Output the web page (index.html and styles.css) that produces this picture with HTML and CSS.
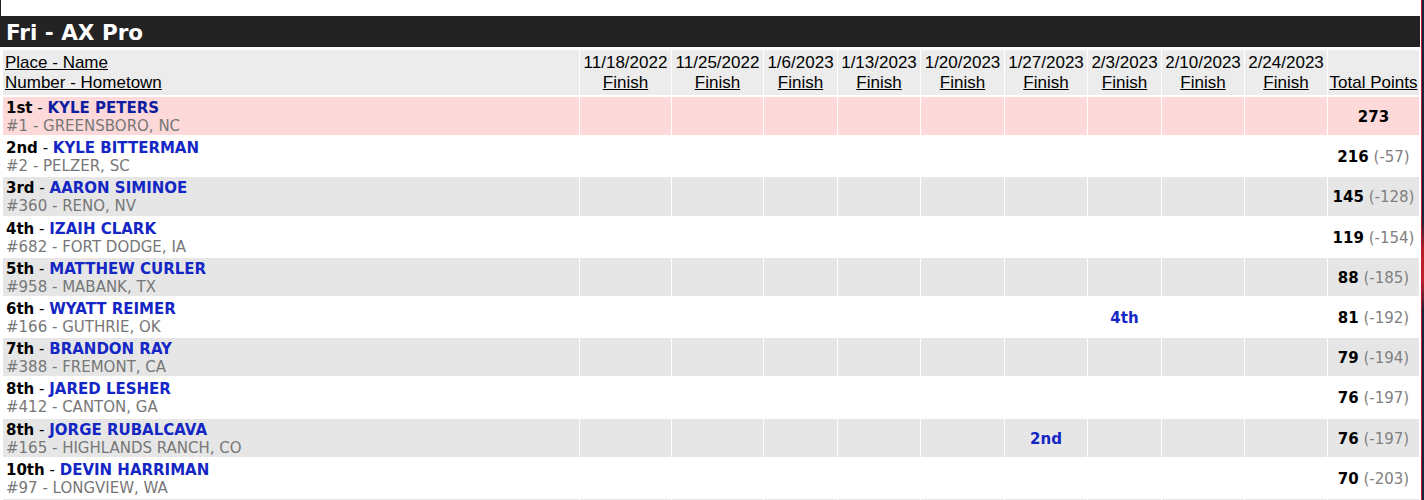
FILE: index.html
```html
<!DOCTYPE html>
<html>
<head>
<meta charset="utf-8">
<title>Fri - AX Pro</title>
<link rel="stylesheet" href="styles.css">
</head>
<body>
<div class="page">
  <div class="topgap"></div>
  <div class="title">Fri - AX Pro</div>
  <table class="standings">
    <colgroup>
      <col class="c-name">
      <col class="w91"><col class="w91"><col class="w73"><col class="w82"><col class="w83">
      <col class="w82"><col class="w73"><col class="w82"><col class="w82"><col class="w91">
    </colgroup>
    <thead>
      <tr>
        <th class="h-name"><a href="#">Place - Name</a><br><a href="#">Number - Hometown</a></th>
        <th>11/18/2022<br><a href="#">Finish</a></th>
        <th>11/25/2022<br><a href="#">Finish</a></th>
        <th>1/6/2023<br><a href="#">Finish</a></th>
        <th>1/13/2023<br><a href="#">Finish</a></th>
        <th>1/20/2023<br><a href="#">Finish</a></th>
        <th>1/27/2023<br><a href="#">Finish</a></th>
        <th>2/3/2023<br><a href="#">Finish</a></th>
        <th>2/10/2023<br><a href="#">Finish</a></th>
        <th>2/24/2023<br><a href="#">Finish</a></th>
        <th><a href="#">Total Points</a></th>
      </tr>
    </thead>
    <tbody>
      <tr class="leader">
        <td class="name"><b>1st</b> - <a class="rider first" href="#">KYLE PETERS</a><br><span class="town">#1 - GREENSBORO, NC</span></td>
        <td></td><td></td><td></td><td></td><td></td><td></td><td></td><td></td><td></td>
        <td class="total"><b>273</b></td>
      </tr>
      <tr class="odd">
        <td class="name"><b>2nd</b> - <a class="rider" href="#">KYLE BITTERMAN</a><br><span class="town">#2 - PELZER, SC</span></td>
        <td></td><td></td><td></td><td></td><td></td><td></td><td></td><td></td><td></td>
        <td class="total"><b>216</b> <span class="diff">(-57)</span></td>
      </tr>
      <tr class="even">
        <td class="name"><b>3rd</b> - <a class="rider" href="#">AARON SIMINOE</a><br><span class="town">#360 - RENO, NV</span></td>
        <td></td><td></td><td></td><td></td><td></td><td></td><td></td><td></td><td></td>
        <td class="total"><b>145</b> <span class="diff">(-128)</span></td>
      </tr>
      <tr class="odd">
        <td class="name"><b>4th</b> - <a class="rider" href="#">IZAIH CLARK</a><br><span class="town">#682 - FORT DODGE, IA</span></td>
        <td></td><td></td><td></td><td></td><td></td><td></td><td></td><td></td><td></td>
        <td class="total"><b>119</b> <span class="diff">(-154)</span></td>
      </tr>
      <tr class="even">
        <td class="name"><b>5th</b> - <a class="rider" href="#">MATTHEW CURLER</a><br><span class="town">#958 - MABANK, TX</span></td>
        <td></td><td></td><td></td><td></td><td></td><td></td><td></td><td></td><td></td>
        <td class="total"><b>88</b> <span class="diff">(-185)</span></td>
      </tr>
      <tr class="odd">
        <td class="name"><b>6th</b> - <a class="rider" href="#">WYATT REIMER</a><br><span class="town">#166 - GUTHRIE, OK</span></td>
        <td></td><td></td><td></td><td></td><td></td><td></td><td class="finish"><a href="#">4th</a></td><td></td><td></td>
        <td class="total"><b>81</b> <span class="diff">(-192)</span></td>
      </tr>
      <tr class="even">
        <td class="name"><b>7th</b> - <a class="rider" href="#">BRANDON RAY</a><br><span class="town">#388 - FREMONT, CA</span></td>
        <td></td><td></td><td></td><td></td><td></td><td></td><td></td><td></td><td></td>
        <td class="total"><b>79</b> <span class="diff">(-194)</span></td>
      </tr>
      <tr class="odd">
        <td class="name"><b>8th</b> - <a class="rider" href="#">JARED LESHER</a><br><span class="town">#412 - CANTON, GA</span></td>
        <td></td><td></td><td></td><td></td><td></td><td></td><td></td><td></td><td></td>
        <td class="total"><b>76</b> <span class="diff">(-197)</span></td>
      </tr>
      <tr class="even">
        <td class="name"><b>8th</b> - <a class="rider" href="#">JORGE RUBALCAVA</a><br><span class="town">#165 - HIGHLANDS RANCH, CO</span></td>
        <td></td><td></td><td></td><td></td><td></td><td class="finish"><a href="#">2nd</a></td><td></td><td></td><td></td>
        <td class="total"><b>76</b> <span class="diff">(-197)</span></td>
      </tr>
      <tr class="odd">
        <td class="name"><b>10th</b> - <a class="rider" href="#">DEVIN HARRIMAN</a><br><span class="town">#97 - LONGVIEW, WA</span></td>
        <td></td><td></td><td></td><td></td><td></td><td></td><td></td><td></td><td></td>
        <td class="total"><b>70</b> <span class="diff">(-203)</span></td>
      </tr>
      <tr class="even">
        <td class="name">&nbsp;<br>&nbsp;</td>
        <td></td><td></td><td></td><td></td><td></td><td></td><td></td><td></td><td></td>
        <td class="total"></td>
      </tr>
    </tbody>
  </table>
</div>
</body>
</html>
```
FILE: styles.css
```css
html, body {
  margin: 0;
  padding: 0;
}
body {
  background-color: #17243c;
  background-image:
    linear-gradient(to bottom, #17243c 0, #17243c 44%, #b81e2c 50%, #c0202e 56%, #17243c 62%, #17243c 100%);
  background-repeat: no-repeat;
  height: 500px;
  overflow: hidden;
}
.page {
  width: 1421px;
  background: #ffffff;
  height: 500px;
  overflow: hidden;
  box-shadow: 1px 0 0 #c0202e;
}
.topgap {
  height: 16px;
  border-left: 1px solid #1e1e1e;
  box-sizing: border-box;
}
.title {
  width: 1420px;
  height: 31px;
  background: #232323;
  color: #ffffff;
  font-family: "DejaVu Sans", Verdana, sans-serif;
  font-weight: bold;
  font-size: 21.5px;
  line-height: 33px;
  padding-left: 6px;
  box-sizing: border-box;
}
.standings {
  margin: 1px 0 0 2px;
  width: 1418px;
  table-layout: fixed;
  border-collapse: separate;
  border-spacing: 1px 2px;
  font-family: "DejaVu Sans", Verdana, sans-serif;
  font-size: 15px;
}
.w91 { width: 91px; }
.w83 { width: 83px; }
.w82 { width: 82px; }
.w73 { width: 73px; }

.standings th {
  background: #ececec;
  font-family: "Liberation Sans", Arial, sans-serif;
  font-weight: normal;
  font-size: 17px;
  line-height: 20px;
  color: #000000;
  text-align: center;
  vertical-align: bottom;
  padding: 3px 0 2px;
  white-space: nowrap;
  height: 40px;
}
.standings th.h-name {
  text-align: left;
  padding-left: 2px;
}
.standings th a {
  color: #000000;
  text-decoration: underline;
}
.standings td {
  padding: 2px 0 0.2px;
  line-height: 18px;
  height: 36px;
  vertical-align: middle;
  text-align: center;
  white-space: nowrap;
}
.standings td.name {
  text-align: left;
  padding-left: 3px;
  color: #000000;
}
.leader td { background: #fdd9d9; }
.odd td { background: #ffffff; }
.even td { background: #e6e6e6; }

.rider {
  color: #1426c4;
  font-weight: bold;
  text-decoration: none;
}
.rider.first {
  color: #0e1ea0;
}
.town {
  color: #777777;
}
.total b {
  color: #000000;
}
.diff {
  color: #808080;
}
.finish a {
  color: #1426c4;
  font-weight: bold;
  text-decoration: none;
}
```
